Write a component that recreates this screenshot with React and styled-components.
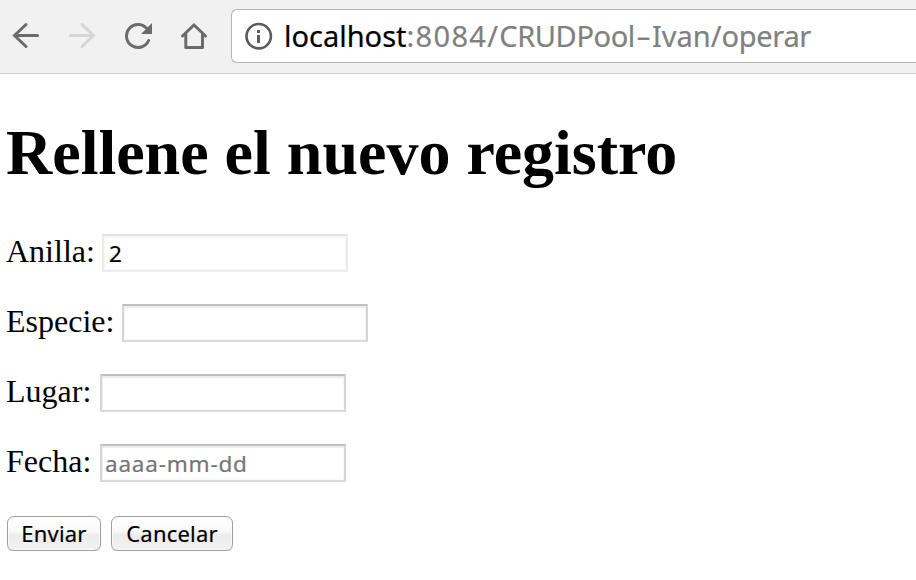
import React from 'react';
import styled, { createGlobalStyle } from 'styled-components';

const GlobalStyle = createGlobalStyle`
  *, *::before, *::after { box-sizing: border-box; }
  body { margin: 0; background: #fff; overflow: hidden; }
`;

const Toolbar = styled.header`
  display: flex;
  align-items: flex-start;
  height: 74px;
  padding-top: 9px;
  background: #f1f1f1;
  border-bottom: 1px solid #d0d0d0;
`;

const NavIcons = styled.nav`
  display: flex;
  gap: 28px;
  margin: 13px 23px 0 12px;
  width: 196px;
  flex: none;
`;

const NavIcon = styled.svg`
  display: block;
  flex: none;
  width: 28px;
  height: 28px;
  color: ${(p) => (p.$disabled ? '#d6d6d6' : '#6b6b6b')};
  fill: none;
  stroke: currentColor;
  stroke-width: 3;
  stroke-linecap: round;
`;

const AddressBar = styled.div`
  display: flex;
  align-items: center;
  flex: 1;
  height: 54px;
  padding-left: 13px;
  background: #fff;
  border: 1px solid #b5b5b5;
  border-right: 0;
  border-radius: 6px 0 0 6px;
`;

const InfoIcon = styled.svg`
  width: 28px;
  height: 28px;
  margin-right: 11px;
  flex: none;
`;

const Url = styled.span`
  color: #808080;
  font: 29px/50px 'Noto Sans', sans-serif;
  letter-spacing: ${(p) => p.$spacing}px;
  white-space: pre;
  -webkit-text-stroke: 0.2px currentColor;
`;

const Host = styled(Url)`
  color: #000;
`;

const Dash = styled(Url)`
  width: 17px;
  text-align: center;
  transform: scaleX(1.6);
`;

const Page = styled.main`
  padding: 42px 6px 0;
`;

const Title = styled.h1`
  margin: 0 0 44px;
  font: bold 64px/74px 'Liberation Serif', serif;
  color: #000;
`;

const Form = styled.form`
  display: flex;
  flex-direction: column;
  gap: 32px;
`;

const Field = styled.label`
  display: flex;
  height: 38px;
  font: 32px/34px 'Liberation Serif', serif;
  color: #000;
`;

const FieldName = styled.span`
  flex: none;
  width: ${(p) => p.$width}px;
`;

const TextInput = styled.input`
  width: 246px;
  height: 38px;
  padding: ${(p) => (p.readOnly ? '1px 5px 0' : '0 3px 0')};
  border: 2px solid;
  border-color: ${(p) => (p.readOnly ? '#e2e2e2 #ebebeb #eee' : '#c0c0c0 #d5d5d5 #dadada')};
  border-radius: 0;
  outline: 0;
  background: #fff;
  box-shadow: inset 0 2px 1px ${(p) => (p.readOnly ? '#f6f6f6' : '#ececec')}, inset 0 0 1px 1px #f8f8f8;
  font: 22.5px 'Noto Sans', sans-serif;
  letter-spacing: ${(p) => (p.placeholder ? 0.8 : 0)}px;
  -webkit-text-stroke: 0.2px currentColor;
  color: #000;
  &::placeholder { color: #757575; opacity: 1; }
`;

const Actions = styled.div`
  display: flex;
  gap: 10px;
  padding: 2px 0 0 1px;
`;

const Button = styled.button`
  width: ${(p) => p.$width}px;
  height: 35px;
  padding: 0 0 1px;
  border: 1px solid #a0a0a0;
  border-radius: 7px;
  background: linear-gradient(#fff 0%, #f8f8f8 46%, #ececec 54%, #f1f1f1 100%);
  box-shadow: 0 1px 1px #0003, inset 0 0 0 1px #ffffffa0;
  color: #000;
  font: 22px/30px 'Noto Sans', sans-serif;
  letter-spacing: 0.2px;
  -webkit-text-stroke: 0.2px currentColor;
  white-space: nowrap;
`;

const fields = [
  { label: 'Anilla:', labelWidth: 96, name: 'anilla', defaultValue: '2', readOnly: true },
  { label: 'Especie:', labelWidth: 116, name: 'especie' },
  { label: 'Lugar:', labelWidth: 94, name: 'lugar' },
  { label: 'Fecha:', labelWidth: 94, name: 'fecha', placeholder: 'aaaa-mm-dd' },
];

export default function App() {
  return (
    <>
      <GlobalStyle />
      <Toolbar>
        <NavIcons>
          <NavIcon viewBox="0 0 28 28"><path d="M25.5 13.5H2.5M14 2.5L2.5 13.5L14 24.5" /></NavIcon>
          <NavIcon viewBox="0 0 28 28" $disabled><path d="M2.5 13.5H25.5M14 2.5L25.5 13.5L14 24.5" /></NavIcon>
          <NavIcon viewBox="0 0 28 28">
            <path d="M23.3 7.2A11.5 11.5 0 1 0 24.6 18.5" />
            <path d="M28 1V12H17Z" fill="currentColor" stroke="none" />
          </NavIcon>
          <NavIcon viewBox="0 0 28 28">
            <path d="M2.5 14L14 3L25.5 14" />
            <path d="M5.8 12V25.5H22.5V12" strokeLinejoin="round" />
          </NavIcon>
        </NavIcons>
        <AddressBar>
          <InfoIcon viewBox="0 0 28 28">
            <circle cx="13.7" cy="14.2" r="12.2" fill="none" stroke="#5b5b5b" strokeWidth="2.6" />
            <path d="M12 8h3v3h-3zM12 13h3v8h-3z" fill="#5b5b5b" />
          </InfoIcon>
          <Host $spacing={0}>localhost</Host>
          <Url $spacing={1.3}>:8084/</Url>
          <Url $spacing={-0.4}>CRUDPool</Url>
          <Dash $spacing={0}>-</Dash>
          <Url $spacing={0}>Ivan/</Url>
          <Url $spacing={-0.3}>operar</Url>
        </AddressBar>
      </Toolbar>
      <Page>
        <Title>Rellene el nuevo registro</Title>
        <Form onSubmit={(e) => e.preventDefault()}>
          {fields.map(({ label, labelWidth, ...input }) => (
            <Field key={input.name}>
              <FieldName $width={labelWidth}>{label}</FieldName>
              <TextInput {...input} />
            </Field>
          ))}
          <Actions>
            <Button $width={94}>Enviar</Button>
            <Button $width={122}>Cancelar</Button>
          </Actions>
        </Form>
      </Page>
    </>
  );
}
